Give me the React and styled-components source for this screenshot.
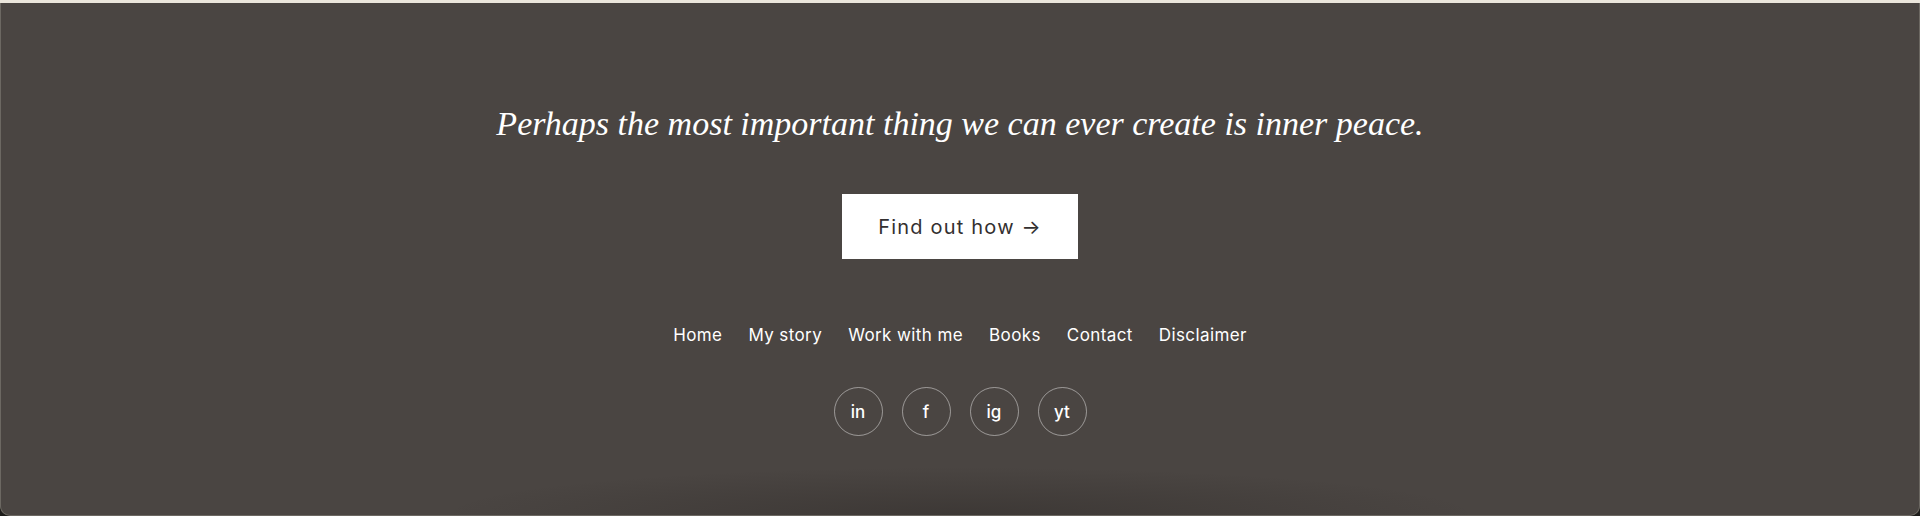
import React from 'react';
import styled, { createGlobalStyle } from 'styled-components';

const GlobalStyle = createGlobalStyle`
  html, body {
    margin: 0;
    padding: 0;
    background: #1d1c1a;
  }
  body {
    font-family: Inter, "Noto Sans", sans-serif;
  }
`;

const TopStrip = styled.div`
  height: 3px;
  background: #ebe6dc;
`;

const Footer = styled.footer`
  box-sizing: border-box;
  height: 513px;
  background-color: #4a4542;
  background-image: radial-gradient(ellipse 520px 48px at 50% 100%, rgba(30, 26, 24, 0.3), rgba(30, 26, 24, 0) 100%);
  border: 1px solid #6c6862;
  border-top: none;
  border-radius: 0 0 10px 10px;
  display: flex;
  flex-direction: column;
  align-items: center;
  padding-top: 101px;
`;

const Quote = styled.p`
  margin: 0;
  font-family: "Liberation Serif", "DejaVu Serif", serif;
  font-style: italic;
  font-size: 34px;
  line-height: 40px;
  color: #ffffff;
`;

const CtaButton = styled.a`
  margin-top: 50px;
  width: 236px;
  height: 65px;
  display: flex;
  align-items: center;
  justify-content: center;
  background: #ffffff;
  color: #333030;
  font-size: 20px;
  letter-spacing: 1.2px;
  text-decoration: none;
`;

const Nav = styled.nav`
  margin-top: 66px;
  display: flex;
  gap: 26px;
`;

const NavLink = styled.a`
  color: #ffffff;
  font-size: 17px;
  letter-spacing: 0.4px;
  text-decoration: none;
`;

const Socials = styled.div`
  margin-top: 42px;
  display: flex;
  gap: 19px;
`;

const SocialLink = styled.a`
  box-sizing: border-box;
  width: 49px;
  height: 49px;
  border-radius: 50%;
  border: 1px solid rgba(255, 255, 255, 0.45);
  display: flex;
  align-items: center;
  justify-content: center;
  color: #ffffff;
  font-size: 17px;
  font-weight: 500;
  text-decoration: none;
`;

const navItems = ['Home', 'My story', 'Work with me', 'Books', 'Contact', 'Disclaimer'];
const socials = ['in', 'f', 'ig', 'yt'];

const App = () => (
  <>
    <GlobalStyle />
    <TopStrip />
    <Footer>
      <Quote>Perhaps the most important thing we can ever create is inner peace.</Quote>
      <CtaButton href="#">Find out how →</CtaButton>
      <Nav>
        {navItems.map((item) => (
          <NavLink key={item} href="#">{item}</NavLink>
        ))}
      </Nav>
      <Socials>
        {socials.map((s) => (
          <SocialLink key={s} href="#">{s}</SocialLink>
        ))}
      </Socials>
    </Footer>
  </>
);

export default App;
